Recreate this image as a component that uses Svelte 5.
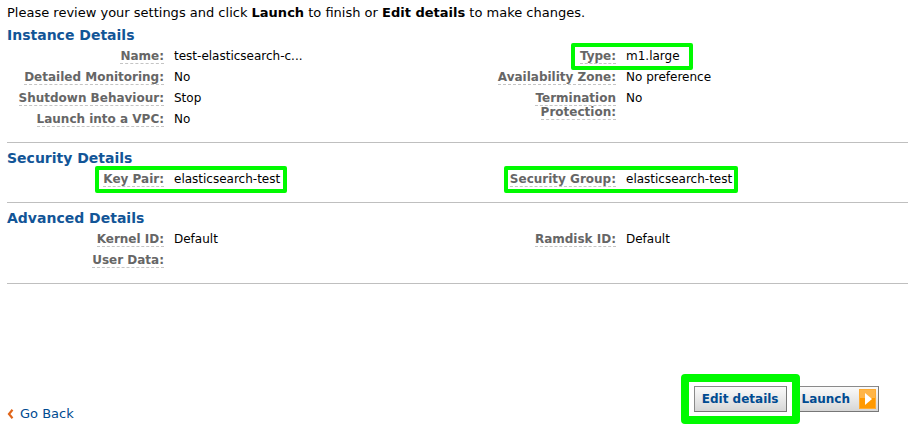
<script>
  const sections = [
    {
      title: 'Instance Details',
      columns: [
        [
          { label: 'Name:', value: 'test-elasticsearch-c...' },
          { label: 'Detailed Monitoring:', value: 'No' },
          { label: 'Shutdown Behaviour:', value: 'Stop' },
          { label: 'Launch into a VPC:', value: 'No' }
        ],
        [
          { label: 'Type:', value: 'm1.large', mark: { left: 112, width: 122 } },
          { label: 'Availability Zone:', value: 'No preference' },
          { label: 'Termination Protection:', value: 'No' }
        ]
      ]
    },
    {
      title: 'Security Details',
      columns: [
        [{ label: 'Key Pair:', value: 'elasticsearch-test', mark: { left: 88, width: 192 } }],
        [{ label: 'Security Group:', value: 'elasticsearch-test', mark: { left: 45, width: 234 } }]
      ]
    },
    {
      title: 'Advanced Details',
      columns: [
        [
          { label: 'Kernel ID:', value: 'Default' },
          { label: 'User Data:', value: '' }
        ],
        [{ label: 'Ramdisk ID:', value: 'Default' }]
      ]
    }
  ];
</script>

<main>
  <p class="intro">
    Please review your settings and click <strong>Launch</strong> to finish or
    <strong>Edit details</strong> to make changes.
  </p>

  {#each sections as section}
    <section>
      <h2>{section.title}</h2>
      <div class="columns">
        {#each section.columns as rows}
          <dl>
            {#each rows as row}
              <div class="row">
                <dt><span>{row.label}</span></dt>
                <dd>
                  {row.value}
                  {#if row.mark}
                    <i class="mark" style="left: {row.mark.left}px; width: {row.mark.width}px"></i>
                  {/if}
                </dd>
              </div>
            {/each}
          </dl>
        {/each}
      </div>
    </section>
  {/each}

  <footer>
    <a href="#back">
      <svg width="7" height="10" viewBox="0 0 7 10" aria-hidden="true">
        <path d="M5.5 0.8 L2 5 L5.5 9.2" fill="none" stroke="#e0651a" stroke-width="2.2" />
      </svg>
      Go Back
    </a>
    <div class="actions">
      <div class="edit">
        <button type="button">Edit details</button>
        <i class="mark thick"></i>
      </div>
      <button type="button" class="launch">
        Launch
        <svg width="17" height="20" viewBox="0 0 17 20" aria-hidden="true">
          <rect width="17" height="20" fill="#ff9900" />
          <rect width="17" height="9" fill="#ffb547" />
          <rect x="0.5" y="0.5" width="16" height="19" fill="none" stroke="#ffac33" />
          <path d="M6 4 L13 10 L6 16 Z" fill="#fff" />
        </svg>
      </button>
    </div>
  </footer>
</main>

<style>
  :global(body) {
    margin: 0;
    background: #fff;
  }

  main {
    padding: 6px 0 16px 7px;
    font: 12px/14px Verdana, 'DejaVu Sans', sans-serif;
    color: #000;
  }

  .intro {
    margin: 0;
    font-size: 13px;
  }

  section {
    padding: 6px 0 12px;
    border-bottom: 1px solid #bfbfbf;
  }

  h2 {
    margin: 0 0 2px;
    font-size: 14px;
    line-height: 18px;
    color: #125597;
  }

  .columns {
    display: grid;
    grid-template-columns: 1fr 1fr;
    gap: 3px;
  }

  dl {
    margin: 0;
  }

  .row {
    position: relative;
    display: flex;
    gap: 10px;
    padding: 3px 0 4px;
  }

  dt {
    flex: none;
    width: 157px;
    text-align: right;
    font-weight: bold;
    color: #666;
  }

  dt span {
    border-bottom: 1px dashed #c4c4c4;
  }

  dd {
    margin: 0;
  }

  .mark {
    position: absolute;
    top: -3px;
    bottom: -3px;
    box-sizing: border-box;
    border: 4px solid #00fa00;
    border-radius: 2px;
    pointer-events: none;
  }

  footer {
    display: flex;
    justify-content: space-between;
    align-items: flex-start;
    padding: 102px 29px 0 0;
  }

  a {
    display: flex;
    align-items: center;
    gap: 6px;
    margin-top: 20px;
    font-size: 13px;
    line-height: 16px;
    color: #004b91;
    text-decoration: none;
  }

  .actions {
    display: flex;
    gap: 6px;
  }

  .edit {
    position: relative;
  }

  .thick {
    inset: -12px -13px;
    border-width: 8px;
    border-radius: 4px;
  }

  button {
    display: flex;
    align-items: center;
    gap: 9px;
    height: 26px;
    padding: 0 7px;
    border: 1px solid #8a8a8a;
    border-right-color: #777;
    border-bottom-color: #777;
    border-radius: 0;
    background: linear-gradient(#fafafa, #e9e9e9 50%, #d6d6d6);
    font: bold 12px/14px Verdana, 'DejaVu Sans', sans-serif;
    color: #004b91;
    white-space: nowrap;
  }

  .launch {
    padding: 0 2px 0 8px;
  }
</style>
